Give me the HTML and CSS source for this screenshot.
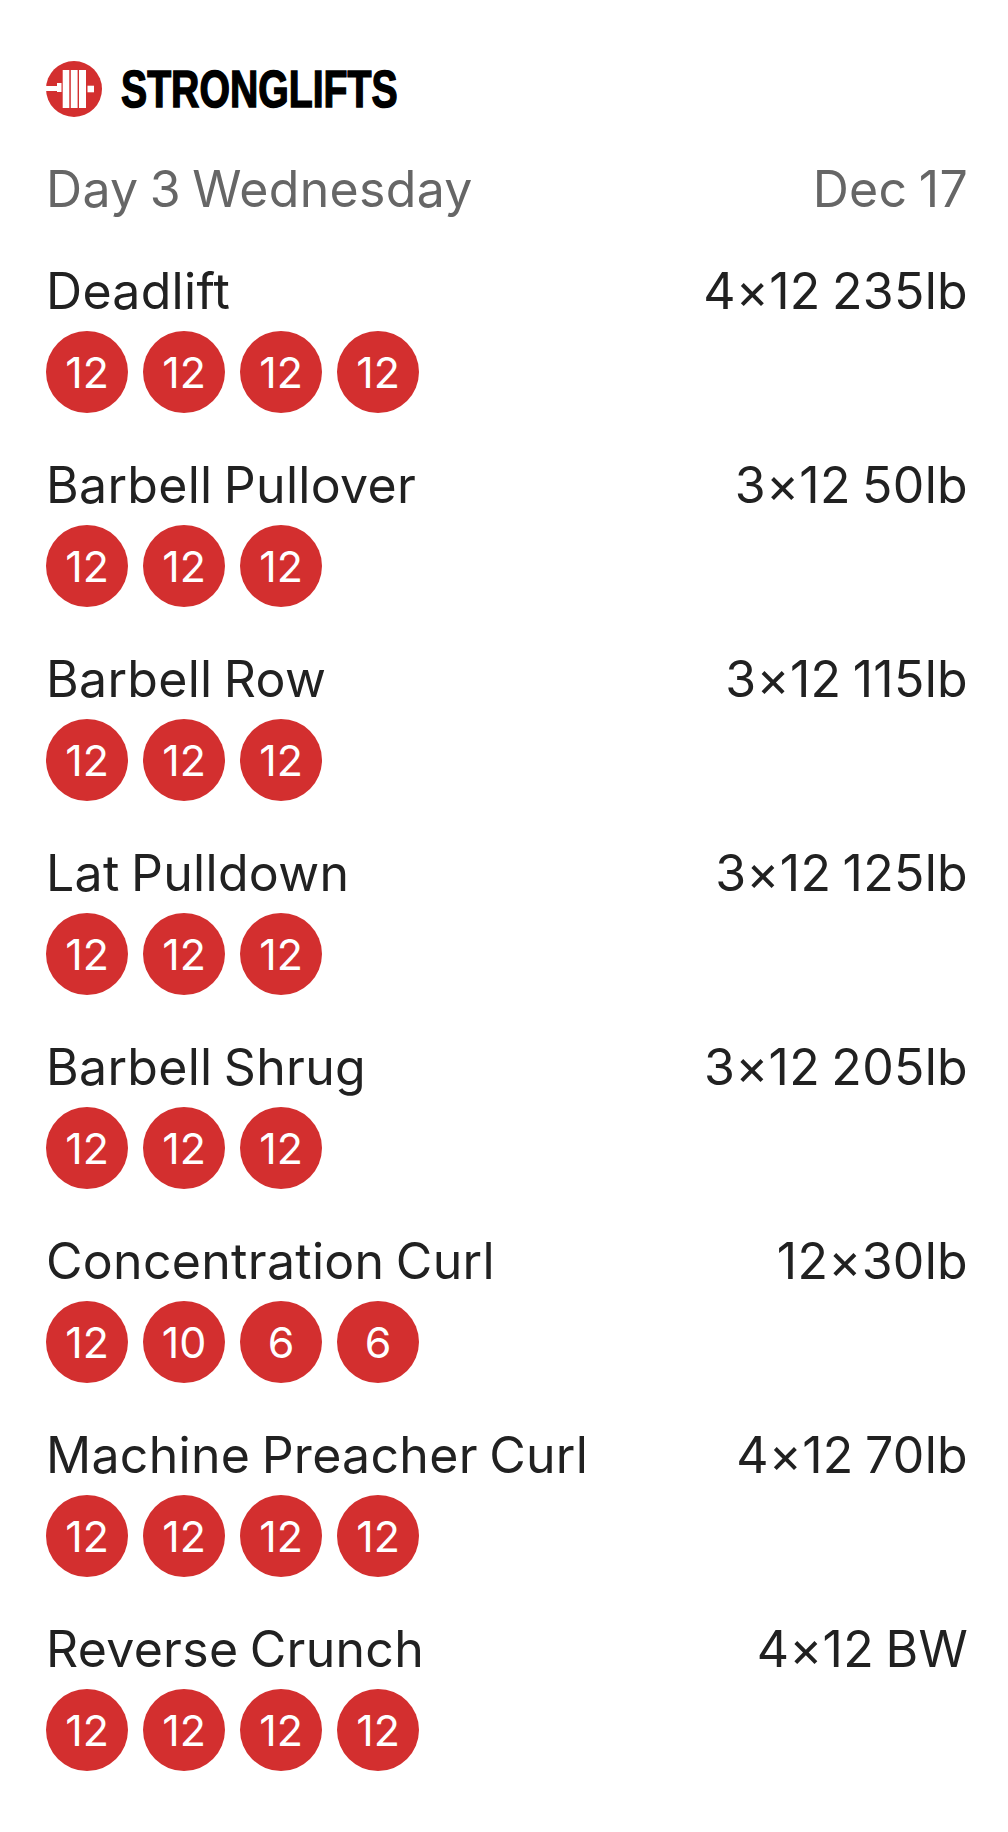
FILE: index.html
```html
<!DOCTYPE html>
<html lang="en">
  <head>
    <meta charset="UTF-8" />
    <title>Stronglifts</title>
    <link rel="stylesheet" href="styles.css">
  </head>
  <body>
    <header class="logo">
      <svg class="logo-icon" viewBox="0 0 56 56" width="56" height="56">
        <circle cx="28" cy="28" r="28" fill="#d32f2f" />
        <g fill="#fff">
          <rect x="0" y="25" width="11" height="5" />
          <rect x="11" y="22" width="4.5" height="9" />
          <rect x="16.7" y="9" width="6.6" height="38" />
          <rect x="24.8" y="9" width="6.8" height="38" />
          <rect x="33" y="9" width="7" height="38" />
          <rect x="41.5" y="24.7" width="6.5" height="6.6" />
        </g>
      </svg>
      <span class="logo-text">STRONGLIFTS</span>
    </header>

    <div class="row day">
      <span>Day 3 Wednesday</span>
      <span>Dec 17</span>
    </div>

    <section class="exercise">
      <div class="row"><span>Deadlift</span><span>4×12 235lb</span></div>
      <div class="sets"><span>12</span><span>12</span><span>12</span><span>12</span></div>
    </section>
    <section class="exercise">
      <div class="row"><span>Barbell Pullover</span><span>3×12 50lb</span></div>
      <div class="sets"><span>12</span><span>12</span><span>12</span></div>
    </section>
    <section class="exercise">
      <div class="row"><span>Barbell Row</span><span>3×12 115lb</span></div>
      <div class="sets"><span>12</span><span>12</span><span>12</span></div>
    </section>
    <section class="exercise">
      <div class="row"><span>Lat Pulldown</span><span>3×12 125lb</span></div>
      <div class="sets"><span>12</span><span>12</span><span>12</span></div>
    </section>
    <section class="exercise">
      <div class="row"><span>Barbell Shrug</span><span>3×12 205lb</span></div>
      <div class="sets"><span>12</span><span>12</span><span>12</span></div>
    </section>
    <section class="exercise">
      <div class="row"><span>Concentration Curl</span><span>12×30lb</span></div>
      <div class="sets"><span>12</span><span>10</span><span>6</span><span>6</span></div>
    </section>
    <section class="exercise">
      <div class="row"><span>Machine Preacher Curl</span><span>4×12 70lb</span></div>
      <div class="sets"><span>12</span><span>12</span><span>12</span><span>12</span></div>
    </section>
    <section class="exercise">
      <div class="row"><span>Reverse Crunch</span><span>4×12 BW</span></div>
      <div class="sets"><span>12</span><span>12</span><span>12</span><span>12</span></div>
    </section>
  </body>
</html>
```
FILE: styles.css
```css
body {
  margin: 0;
  padding: 61px 40px 0 46px;
  background: #fff;
  color: #212121;
  font-family: Inter, "Liberation Sans", sans-serif;
  font-size: 50px;
  letter-spacing: 0.3px;
  word-spacing: -3px;
}

.logo {
  display: flex;
  align-items: center;
  gap: 19px;
  height: 56px;
}

.logo-text {
  font-family: "Liberation Sans", sans-serif;
  font-size: 52px;
  line-height: 54px;
  font-weight: 700;
  color: #000;
  letter-spacing: 0;
  -webkit-text-stroke: 1.5px #000;
  transform: scaleX(0.754);
  transform-origin: left center;
}

.row {
  display: flex;
  justify-content: space-between;
  line-height: 60px;
}

.day {
  margin-top: 42px;
  color: #666;
}

.exercise {
  margin-top: 42px;
}

.sets {
  display: flex;
  gap: 15px;
  margin-top: 10px;
}

.sets span {
  display: flex;
  align-items: center;
  justify-content: center;
  width: 82px;
  height: 82px;
  border-radius: 50%;
  background: #d32f2f;
  color: #fff;
  font-size: 43px;
  letter-spacing: 0;
}
```
